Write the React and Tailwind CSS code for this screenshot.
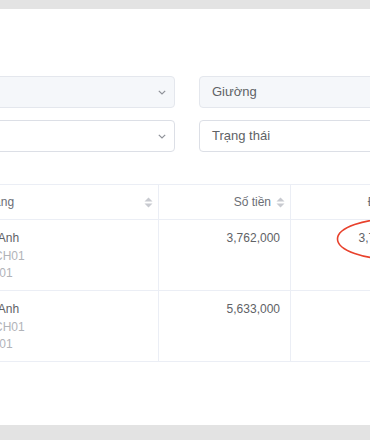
import React from 'react';

const font = { fontFamily: '"Liberation Sans", Arial, sans-serif' };

function SortCaret() {
  return (
    <svg width="9" height="11" viewBox="0 0 9 11" className="shrink-0">
      <path d="M4.5 0.5 L8.5 4.5 L0.5 4.5 Z" fill="#c8cad0" />
      <path d="M4.5 10.5 L8.5 6.5 L0.5 6.5 Z" fill="#c8cad0" />
    </svg>
  );
}

function Chevron() {
  return (
    <svg width="8" height="5" viewBox="0 0 8 5" className="shrink-0">
      <path d="M0.8 0.8 L4 4 L7.2 0.8" fill="none" stroke="#8f9299" strokeWidth="1.2" />
    </svg>
  );
}

const rows = [
  { name: 'Nguyễn Thị Anh', room: 'Mã phòng: CH01', bed: 'Mã giường: 01', amount: '3,762,000', paid: '3,762,000' },
  { name: 'Nguyễn Thị Anh', room: 'Mã phòng: CH01', bed: 'Mã giường: 01', amount: '5,633,000', paid: '' },
];

export default function App() {
  return (
    <div className="w-[370px] h-[440px] overflow-hidden bg-[#e3e3e3]" style={font}>
      <div className="mt-[9px] h-[416px] bg-white overflow-hidden relative">
        <div className="-ml-[76px] w-[700px] pt-[67px]">
          {/* Filters */}
          <div className="grid grid-cols-[251px_251px] gap-x-6 gap-y-3 text-[13px] text-[#606266]">
            <div className="h-8 rounded border border-[#e4e7ed] bg-[#f5f7fa] flex items-center justify-end pr-[8px]">
              <Chevron />
            </div>
            <div className="h-8 rounded border border-[#e4e7ed] bg-[#f5f7fa] flex items-center pl-3">Giường</div>
            <div className="h-8 rounded border border-[#dcdfe6] bg-white flex items-center justify-end pr-[8px]">
              <Chevron />
            </div>
            <div className="h-8 rounded border border-[#dcdfe6] bg-white flex items-center pl-3">Trạng thái</div>
          </div>

          {/* Table */}
          <div className="mt-[32px] border-t border-[#ebeef5] text-[12px] text-[#606266]">
            <div className="flex h-[35px] border-b border-[#ebeef5] text-[#6b6e75]">
              <div className="w-[235px] shrink-0 border-r border-[#ebeef5] flex items-center justify-between pl-[4px] pr-[5px]">
                <span>Tên khách hàng</span>
                <SortCaret />
              </div>
              <div className="w-[132px] shrink-0 border-r border-[#ebeef5] flex items-center justify-end gap-[5px] pr-[5px]">
                <span>Số tiền</span>
                <SortCaret />
              </div>
              <div className="w-[132px] shrink-0 border-r border-[#ebeef5] flex items-center justify-end gap-[5px] pr-[5px]">
                <span>Đã thu</span>
                <SortCaret />
              </div>
            </div>
            {rows.map((r, i) => (
              <div key={i} className="flex h-[71px] border-b border-[#ebeef5] leading-[17.5px]">
                <div className="w-[235px] shrink-0 border-r border-[#ebeef5] pl-[10px] pt-[10px]">
                  <div>{r.name}</div>
                  <div className="text-[#b1b3b8]">{r.room}</div>
                  <div className="text-[#b1b3b8]">{r.bed}</div>
                </div>
                <div className="w-[132px] shrink-0 border-r border-[#ebeef5] text-right pr-[10px] pt-[10px]">{r.amount}</div>
                <div className="w-[132px] shrink-0 border-r border-[#ebeef5] text-right pr-[10px] pt-[10px]">{r.paid}</div>
              </div>
            ))}
          </div>
        </div>

        {/* Annotation */}
        <svg className="absolute left-[336px] top-[208px]" width="120" height="44" viewBox="0 0 120 44">
          <ellipse cx="60" cy="22" rx="58.5" ry="20.5" fill="none" stroke="#e8412c" strokeWidth="1.6" />
        </svg>
      </div>
    </div>
  );
}
